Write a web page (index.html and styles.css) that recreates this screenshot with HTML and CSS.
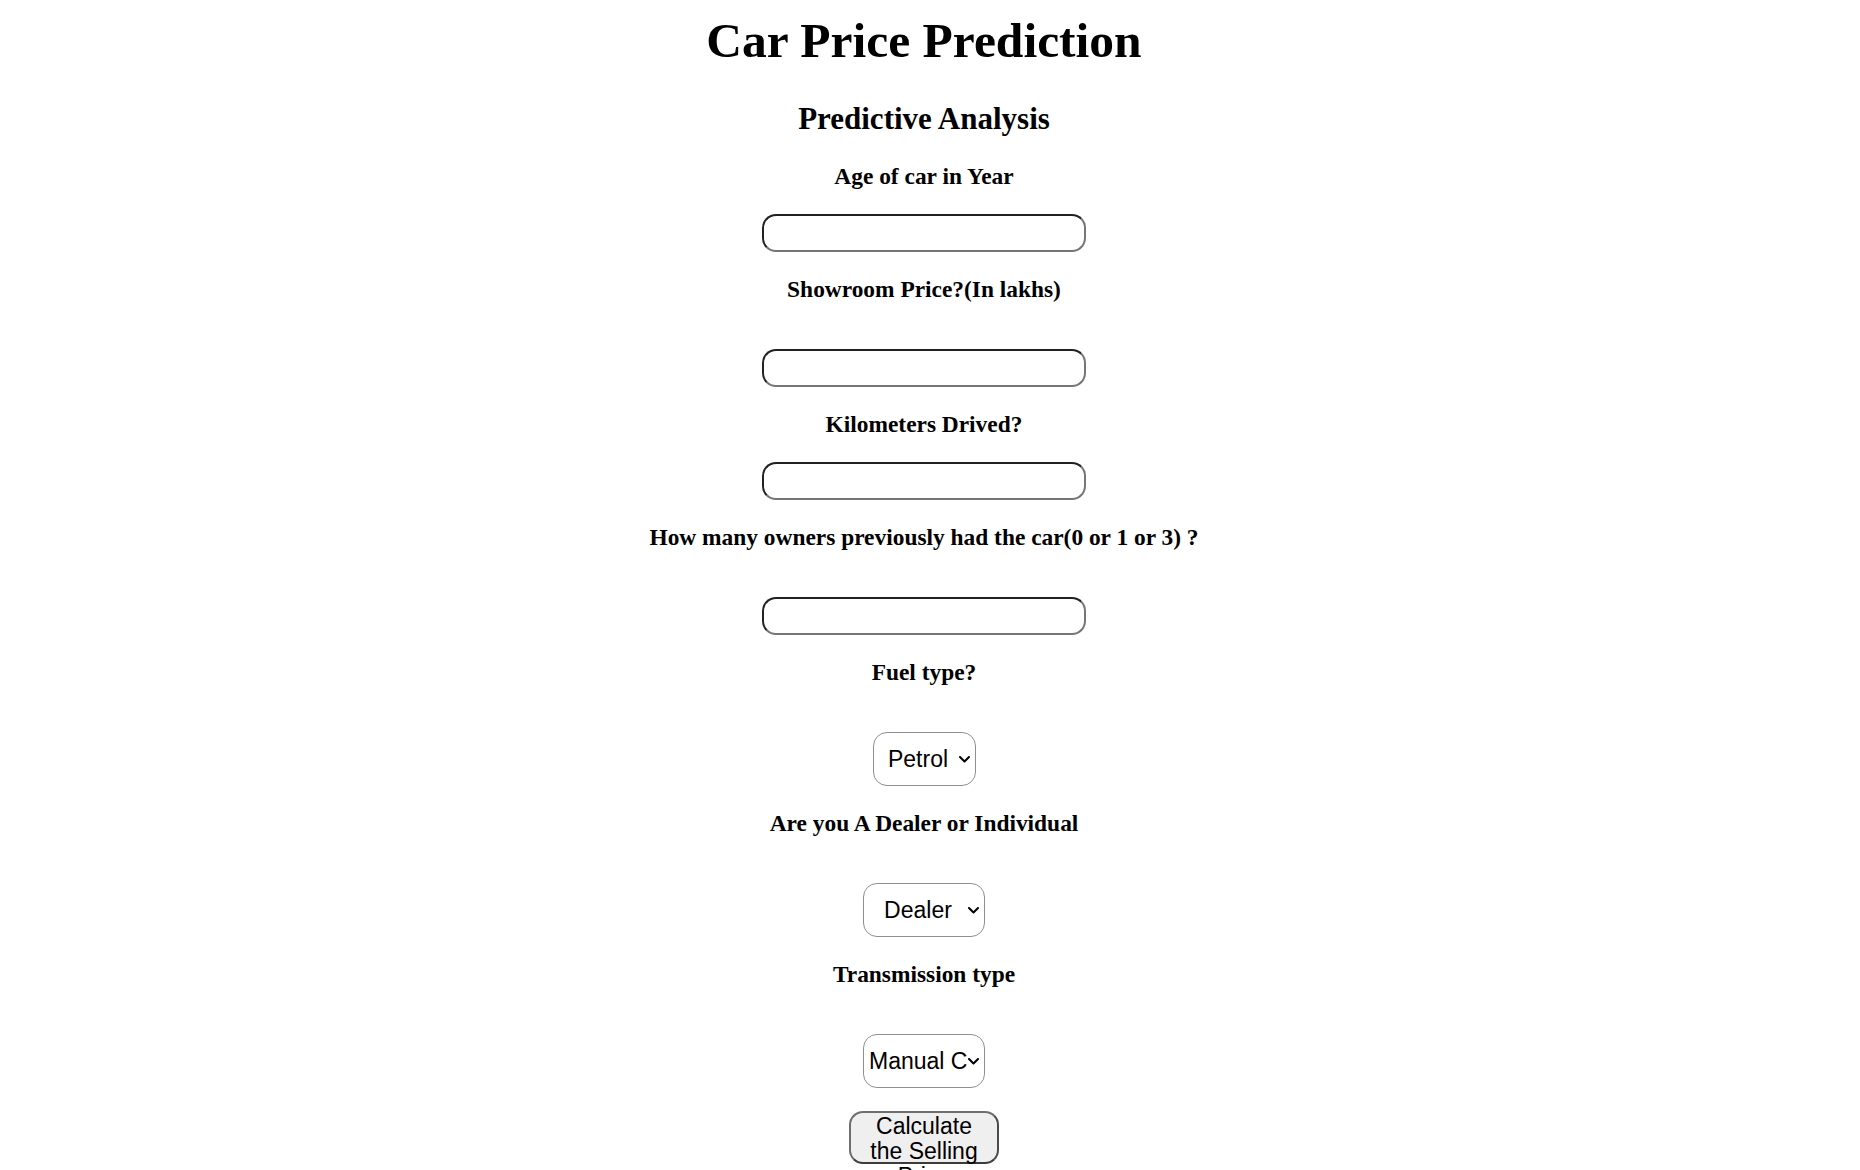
FILE: index.html
```html
<!DOCTYPE html>
<html lang="en">
<head>
<meta charset="utf-8">
<title>Car Price Prediction</title>
<link rel="stylesheet" href="styles.css">
</head>
<body>
<main class="page">
  <h1 class="title">Car Price Prediction</h1>
  <h2 class="subtitle">Predictive Analysis</h2>
  <form class="form" action="#" method="post">
    <label class="label" for="age">Age of car in Year</label>
    <input class="field" id="age" name="age" type="text">

    <label class="label label-gap" for="price">Showroom Price?(In lakhs)</label>
    <input class="field" id="price" name="price" type="text">

    <label class="label" for="kms">Kilometers Drived?</label>
    <input class="field" id="kms" name="kms" type="text">

    <label class="label label-gap" for="owners">How many owners previously had the car(0 or 1 or 3) ?</label>
    <input class="field" id="owners" name="owners" type="text">

    <label class="label label-gap" for="fuel">Fuel type?</label>
    <span class="select-wrap">
      <select class="choice choice-fuel" id="fuel" name="fuel">
        <option>Petrol</option>
        <option>Diesel</option>
        <option>CNG</option>
      </select>
      <svg class="chevron" width="11" height="7" viewBox="0 0 11 7" aria-hidden="true"><path d="M1 1 L5.5 5.5 L10 1" fill="none" stroke="#000" stroke-width="2" stroke-linecap="round" stroke-linejoin="round"/></svg>
    </span>

    <label class="label label-gap" for="seller">Are you A Dealer or Individual</label>
    <span class="select-wrap">
      <select class="choice" id="seller" name="seller">
        <option>Dealer</option>
        <option>Individual</option>
      </select>
      <svg class="chevron" width="11" height="7" viewBox="0 0 11 7" aria-hidden="true"><path d="M1 1 L5.5 5.5 L10 1" fill="none" stroke="#000" stroke-width="2" stroke-linecap="round" stroke-linejoin="round"/></svg>
    </span>

    <label class="label label-gap" for="trans">Transmission type</label>
    <span class="select-wrap">
      <select class="choice" id="trans" name="trans">
        <option>Manual Car</option>
        <option>Automatic Car</option>
      </select>
      <svg class="chevron" width="11" height="7" viewBox="0 0 11 7" aria-hidden="true"><path d="M1 1 L5.5 5.5 L10 1" fill="none" stroke="#000" stroke-width="2" stroke-linecap="round" stroke-linejoin="round"/></svg>
    </span>

    <button class="submit" type="submit">Calculate the Selling Price</button>
  </form>
</main>
</body>
</html>
```

FILE: styles.css
```css
html, body {
  margin: 0;
  background: #ffffff;
}

body {
  color: #000000;
  font-family: "Liberation Serif", "Times New Roman", serif;
}

.page {
  display: flex;
  flex-direction: column;
  align-items: center;
  padding: 12px 12px 60px 0;
}

.title {
  margin: 0;
  font-size: 49.5px;
  line-height: 57px;
  font-weight: 700;
}

.subtitle {
  margin: 32px 0 0;
  font-size: 31px;
  line-height: 36px;
  font-weight: 700;
}

.form {
  margin-top: 26px;
  display: flex;
  flex-direction: column;
  align-items: center;
  gap: 24px;
}

.label {
  display: block;
  font-size: 23.4px;
  line-height: 27px;
  font-weight: 700;
  text-align: center;
}

.label-gap {
  margin-bottom: 22px;
}

.field {
  box-sizing: border-box;
  width: 324px;
  height: 38px;
  margin: 0;
  padding: 0 12px;
  border: 2px inset #767676;
  border-radius: 14px;
  background: #ffffff;
  font: 22px "Liberation Sans", Arial, sans-serif;
  color: #000000;
}

.select-wrap {
  position: relative;
  display: block;
}

.choice {
  display: block;
  box-sizing: border-box;
  width: 122px;
  height: 54px;
  margin: 0;
  padding: 0 17px 0 5px;
  border: 1px solid #8f8f8f;
  border-radius: 14px;
  background: #ffffff;
  font: 23px "Liberation Sans", Arial, sans-serif;
  color: #000000;
  text-align: center;
  text-align-last: center;
  appearance: none;
  -webkit-appearance: none;
}

.choice-fuel {
  width: 103px;
}

.chevron {
  position: absolute;
  right: 6px;
  top: 50%;
  margin-top: -3px;
  pointer-events: none;
}

.submit {
  box-sizing: border-box;
  width: 150px;
  height: 53px;
  margin: -1px 0 0;
  padding: 1px 16px 0;
  display: flex;
  align-items: flex-start;
  justify-content: center;
  text-align: center;
  border: 2px solid #6e6e6e;
  border-bottom-color: #3c3c3c;
  border-right-color: #4a4a4a;
  border-radius: 14px;
  background: #efefef;
  font: 23px/25px "Liberation Sans", Arial, sans-serif;
  color: #000000;
}
```
